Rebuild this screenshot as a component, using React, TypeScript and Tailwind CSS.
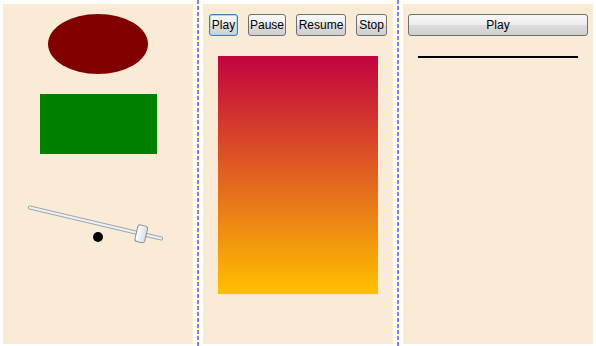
import React from 'react';

const btn =
  'h-[22px] flex items-center justify-center rounded-[3px] border bg-[linear-gradient(to_bottom,#f8f8f8,#ececec_50%,#dddddd_50%,#d0d0d0)] text-[12px] leading-none text-black';

const Divider: React.FC = () => (
  <div className="w-[10px] h-[346px] flex justify-center shrink-0">
    <div className="w-[2px] h-full bg-[repeating-linear-gradient(to_bottom,#8080ff_0px,#8080ff_4px,#ffff80_4px,#ffff80_6px)]" />
  </div>
);

const App: React.FC = () => {
  return (
    <div
      className="w-[596px] h-[346px] bg-white flex pl-[3px] overflow-hidden"
      style={{ fontFamily: '"Liberation Sans", Arial, sans-serif' }}
    >
      {/* Shapes + slider */}
      <div className="w-[190px] h-[340px] mt-[4px] bg-[#faebd7] flex flex-col items-center shrink-0">
        <div className="mt-[10px] w-[100px] h-[60px] rounded-[50%] bg-[#800000]" />
        <div className="mt-[20px] w-[117px] h-[60px] bg-[#008000]" />
        <div className="relative mt-[39px] w-full h-[60px] flex items-center justify-center">
          <div className="relative ml-[-5px] w-[139px] h-[20px] rotate-[13.3deg] flex items-center">
            <div className="w-full h-[4px] rounded-[2px] border border-[#9ca6b0] bg-[#eef2f6]" />
            <div className="absolute left-[111px] top-[1px] w-[11px] h-[18px] rounded-[3px] border border-[#8c939a] bg-[linear-gradient(to_right,#ffffff,#d9e0e8)]" />
          </div>
          <div className="absolute left-[90px] top-[39px] w-[10px] h-[10px] rounded-[50%] bg-black" />
        </div>
      </div>

      <Divider />

      {/* Animation controls */}
      <div className="w-[190px] h-[340px] mt-[4px] bg-[#faebd7] flex flex-col shrink-0">
        <div className="mt-[10px] ml-[6px] flex gap-[10px]">
          <button className={`${btn} w-[29px] border-[#3c7fb1] shadow-[inset_0_0_0_1px_#a8d8ec]`}>Play</button>
          <button className={`${btn} w-[38px] border-[#707070]`}>Pause</button>
          <button className={`${btn} w-[50px] border-[#707070]`}>Resume</button>
          <button className={`${btn} w-[31px] border-[#707070]`}>Stop</button>
        </div>
        <div className="mt-[20px] ml-[15px] w-[160px] h-[238px] bg-[linear-gradient(to_bottom,#c2033f,#ffc000)]" />
      </div>

      <Divider />

      {/* Line animation */}
      <div className="w-[190px] h-[340px] mt-[4px] bg-[#faebd7] flex flex-col shrink-0">
        <button className={`${btn} mt-[10px] ml-[5px] w-[180px] border-[#707070]`}>Play</button>
        <div className="mt-[20px] ml-[15px] w-[160px] h-[2px] bg-black" />
      </div>
    </div>
  );
};

export default App;
